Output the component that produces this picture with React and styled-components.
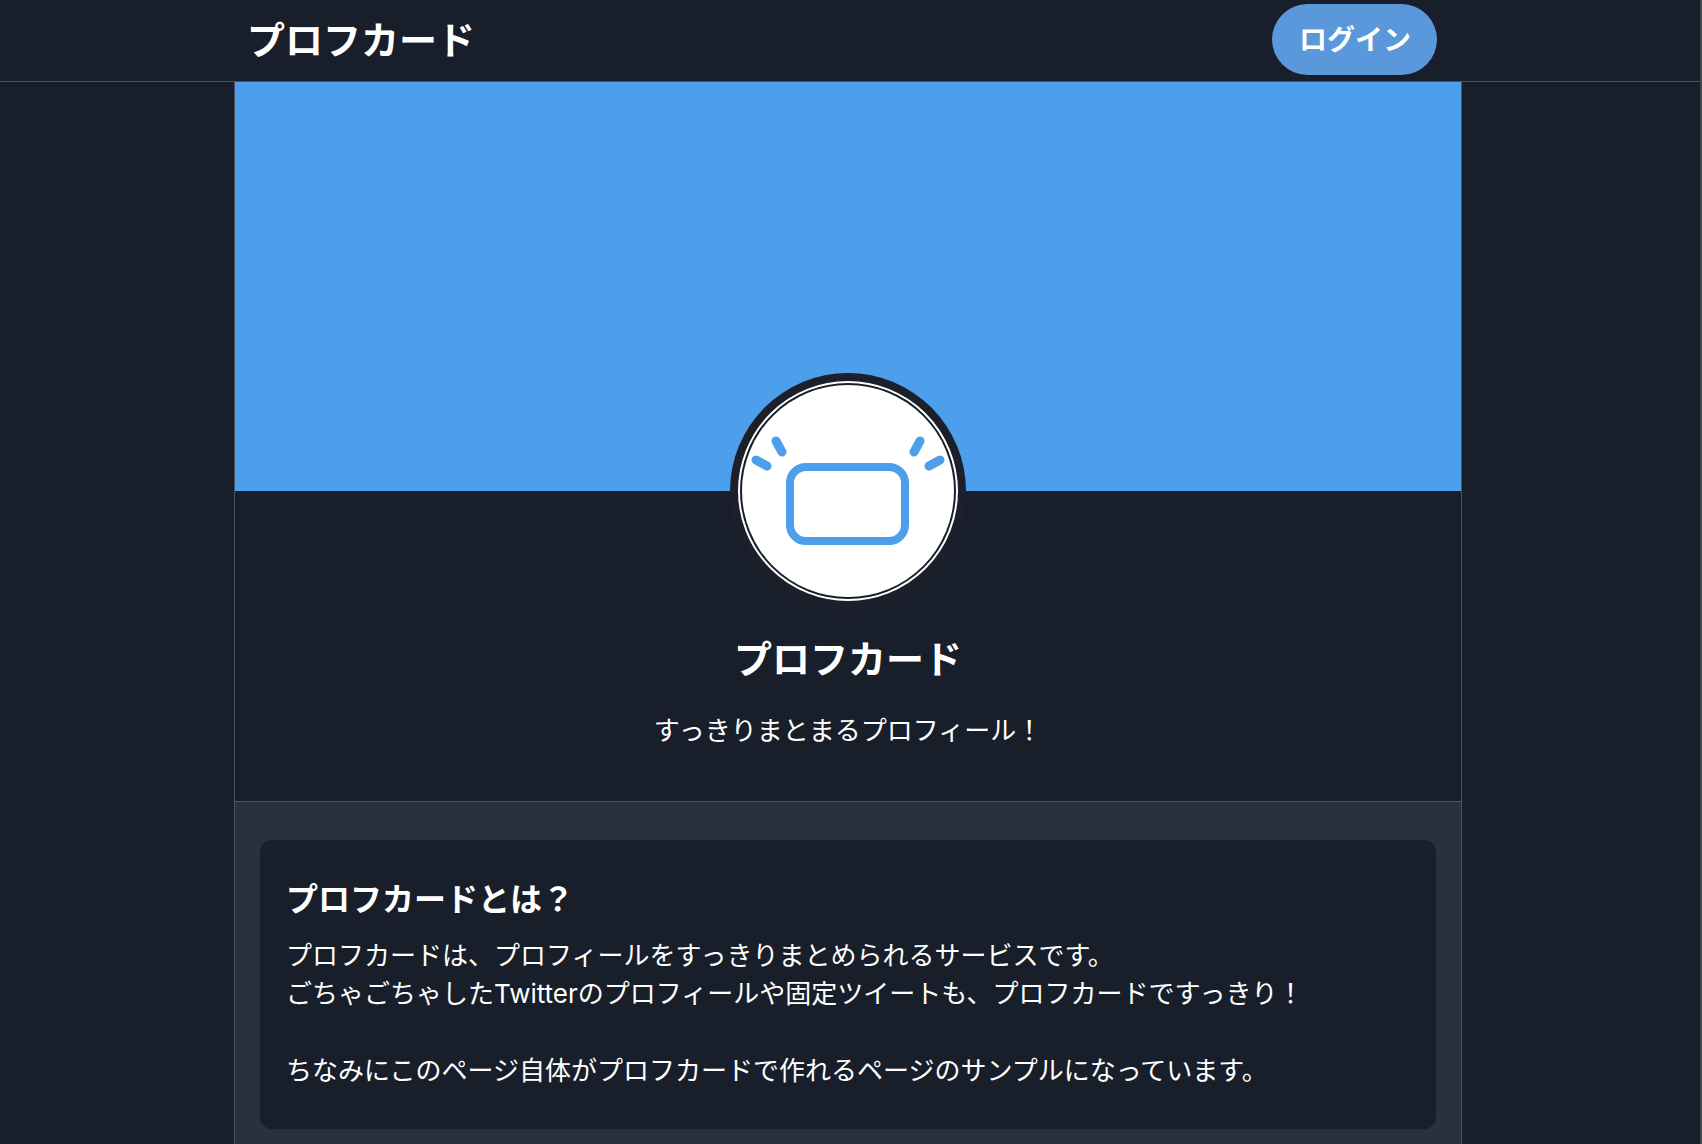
import React from "react";
import styled, { createGlobalStyle, ThemeProvider } from "styled-components";

const theme = {
  colors: {
    base: "#181f2a",
    panel: "#27323e",
    line: "#4a5462",
    ring: "#1c202b",
    main: "#4d9fec",
    button: "#5b97db",
    text: "#ffffff",
  },
  fontSizes: {
    title: "38px",
    h2: "32px",
    button: "28px",
    p: "26px",
  },
  pageWidth: "1228px",
};

const GlobalStyle = createGlobalStyle`
  * {
    box-sizing: border-box;
  }
  body {
    margin: 0;
    color: ${(props) => props.theme.colors.text};
    background-color: ${(props) => props.theme.colors.base};
    font-family: Inter, "Noto Sans CJK JP", sans-serif;
    font-size: ${(props) => props.theme.fontSizes.p};
    line-height: 38px;
  }
`;

const Page = styled.div`
  display: flex;
  flex-direction: column;
  min-height: 100vh;
  border-right: 2px solid #40474f;
`;

const Header = styled.header`
  flex: none;
  padding-right: 4px;
  border-bottom: 1px solid ${(props) => props.theme.colors.line};
`;

const HeaderInner = styled.div`
  display: flex;
  align-items: center;
  justify-content: space-between;
  max-width: ${(props) => props.theme.pageWidth};
  margin: 0 auto;
  padding: 4px 25px 6px 13px;
`;

const Title = styled.h1`
  margin: 0;
  font-size: ${(props) => props.theme.fontSizes.title};
  font-weight: 700;
  line-height: 56px;
`;

const LoginButton = styled.button`
  padding: 16px 26px 15px 27px;
  border: none;
  border-radius: 36px;
  color: inherit;
  background-color: ${({ theme }) => theme.colors.button};
  font-family: inherit;
  font-size: ${({ theme }) => theme.fontSizes.button};
  font-weight: 700;
  line-height: 40px;
  cursor: pointer;
`;

const Main = styled.main`
  display: flex;
  flex: 1;
  padding-right: 4px;
`;

const Column = styled.div`
  display: flex;
  flex-direction: column;
  width: 100%;
  max-width: ${(props) => props.theme.pageWidth};
  margin: 0 auto;
  border: 1px solid ${(props) => props.theme.colors.line};
  border-width: 0 1px;
`;

const Banner = styled.div`
  flex: none;
  aspect-ratio: 3 / 1;
  background-color: ${(props) => props.theme.colors.main};
`;

const Profile = styled.section`
  display: flex;
  flex-direction: column;
  align-items: center;
  padding-bottom: 51px;
  border-bottom: 1px solid ${(props) => props.theme.colors.line};
  text-align: center;
`;

const Avatar = styled.div`
  width: 220px;
  height: 220px;
  margin-top: -110px;
  margin-bottom: 30px;
  padding: 2px;
  border: 2px solid white;
  border-radius: 50%;
  background-color: ${(props) => props.theme.colors.base};
  box-shadow: 0 0 0 8px ${(props) => props.theme.colors.ring};

  svg {
    display: block;
    width: 100%;
    height: 100%;
    border-radius: 50%;
    background-color: white;
  }
`;

const Lead = styled.p`
  margin: 25px 0 0;
`;

const Content = styled.section`
  flex: 1;
  padding: 38px 25px 15px;
  background-color: ${(props) => props.theme.colors.panel};
`;

const Card = styled.article`
  padding: 36px 26px 39px;
  border-radius: 12px;
  background-color: ${(props) => props.theme.colors.base};

  h2 {
    margin: 0 0 13px;
    font-size: ${(props) => props.theme.fontSizes.h2};
    font-weight: 700;
    line-height: 48px;
  }
  p {
    margin: 0;
  }
  p + p {
    margin-top: 39px;
  }
`;

// white circle, 212 units wide
const Logo = () => (
  <svg
    viewBox="0 0 212 212"
    fill="none"
    stroke="#4d9fec"
    strokeLinecap="round"
    role="img"
    aria-label="プロフカード"
  >
    <rect x="48" y="82" width="115" height="74" rx="16" strokeWidth="8" />
    <path
      d="M34 56l6 11M14 75l11 6M178 56l-6 11M198 75l-11 6"
      strokeWidth="9"
    />
  </svg>
);

const App = () => {
  return (
    <ThemeProvider theme={theme}>
      <GlobalStyle />
      <Page>
        <Header>
          <HeaderInner>
            <Title>プロフカード</Title>
            <LoginButton type="button">ログイン</LoginButton>
          </HeaderInner>
        </Header>
        <Main>
          <Column>
            <Banner />
            <Profile>
              <Avatar>
                <Logo />
              </Avatar>
              <Title as="h2">プロフカード</Title>
              <Lead>すっきりまとまるプロフィール！</Lead>
            </Profile>
            <Content>
              <Card>
                <h2>プロフカードとは？</h2>
                <p>
                  プロフカードは、プロフィールをすっきりまとめられるサービスです。
                  <br />
                  ごちゃごちゃしたTwitterのプロフィールや固定ツイートも、プロフカードですっきり！
                </p>
                <p>
                  ちなみにこのページ自体がプロフカードで作れるページのサンプルになっています。
                </p>
              </Card>
            </Content>
          </Column>
        </Main>
      </Page>
    </ThemeProvider>
  );
};

export default App;
